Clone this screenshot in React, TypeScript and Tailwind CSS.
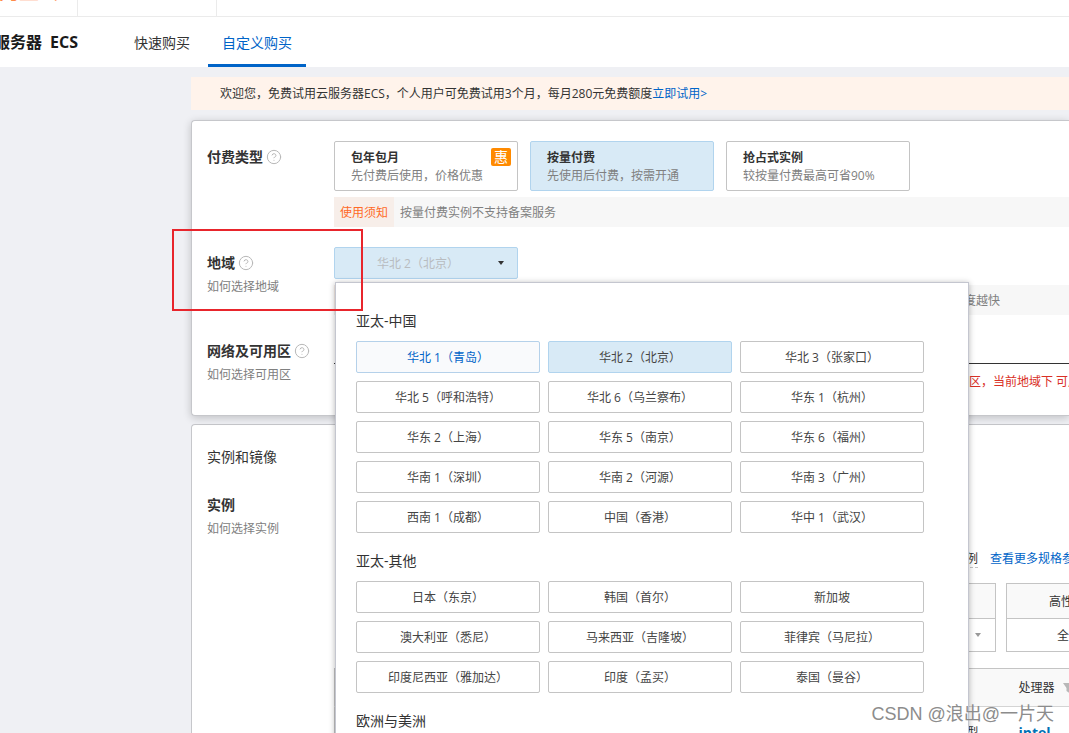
import { useState } from "react";
import type { ReactNode } from "react";
import clsx from "clsx";
import { CircleHelp } from "lucide-react";

const payTypes = [
  { title: "包年包月", desc: "先付费后使用，价格优惠", badge: "惠" },
  { title: "按量付费", desc: "先使用后付费，按需开通" },
  { title: "抢占式实例", desc: "较按量付费最高可省90%" },
];

const regionGroups = [
  {
    name: "亚太-中国",
    regions: [
      "华北 1（青岛）",
      "华北 2（北京）",
      "华北 3（张家口）",
      "华北 5（呼和浩特）",
      "华北 6（乌兰察布）",
      "华东 1（杭州）",
      "华东 2（上海）",
      "华东 5（南京）",
      "华东 6（福州）",
      "华南 1（深圳）",
      "华南 2（河源）",
      "华南 3（广州）",
      "西南 1（成都）",
      "中国（香港）",
      "华中 1（武汉）",
    ],
  },
  {
    name: "亚太-其他",
    regions: [
      "日本（东京）",
      "韩国（首尔）",
      "新加坡",
      "澳大利亚（悉尼）",
      "马来西亚（吉隆坡）",
      "菲律宾（马尼拉）",
      "印度尼西亚（雅加达）",
      "印度（孟买）",
      "泰国（曼谷）",
    ],
  },
  {
    name: "欧洲与美洲",
    regions: ["德国（法兰克福）", "英国（伦敦）", "美国（硅谷）"],
  },
];

const families = ["通用型", "计算型", "异构计算", "高性能计算型"];

function Caret({ className }: { className?: string }) {
  return (
    <svg
      viewBox="0 0 6 4"
      aria-hidden="true"
      className={clsx("pointer-events-none h-1 w-1.5 fill-current", className)}
    >
      <path d="M0 0h6L3 4z" />
    </svg>
  );
}

function Row({
  label,
  link,
  help,
  children,
}: {
  label: string;
  link?: string;
  help?: boolean;
  children: ReactNode;
}) {
  return (
    <div className="flex">
      <div className="w-[127px] shrink-0 pt-1.5">
        <h3 className="flex items-center gap-[3px] text-sm leading-5 font-bold text-[#333]">
          {label}
          {help && (
            <CircleHelp size={16} strokeWidth={1.5} className="text-[#b8b8b8]" />
          )}
        </h3>
        {link && (
          <a href="#" className="mt-1 block leading-5 text-[#808080]">
            {link}
          </a>
        )}
      </div>
      <div className="min-w-0 flex-1">{children}</div>
    </div>
  );
}

function Notice({ tag, children }: { tag: string; children: ReactNode }) {
  return (
    <div className="mt-1.5 flex h-[30px] bg-[#f7f7f7] leading-8 text-[#808080]">
      <span className="w-[60px] bg-[#f7eee9] text-center text-[#ff6a26]">
        {tag}
      </span>
      {children}
    </div>
  );
}

function RegionPanel({
  value,
  onChange,
}: {
  value: string;
  onChange: (region: string) => void;
}) {
  return (
    <div className="absolute top-[35px] left-px z-20 w-[634px] border border-[#c4c6cf] bg-white pt-7 pr-11 pl-5 shadow-[0_1px_6px_rgba(0,0,0,0.3)]">
      {regionGroups.map((group) => (
        <div key={group.name} className="mb-[18px]">
          <h4 className="mb-2.5 text-sm leading-5 text-[#333]">{group.name}</h4>
          <div className="grid grid-cols-3 gap-2">
            {group.regions.map((region, index) => (
              <button
                key={region}
                type="button"
                onClick={() => onChange(region)}
                className={clsx(
                  "h-8 rounded-xs border pt-0.5",
                  region === value
                    ? "border-[#b1d4ee] bg-[#d8eaf6] text-[#444]"
                    : index === 0 && group.name === "亚太-中国"
                      ? "border-[#b5d1ea] bg-[#f9fafc] text-[#0064c8]"
                      : "border-[#c4c4c4] bg-white text-[#444] hover:border-[#b1d4ee]"
                )}
              >
                {region}
              </button>
            ))}
          </div>
        </div>
      ))}
    </div>
  );
}

function Header() {
  return (
    <header className="bg-white">
      <div className="flex h-[17px] overflow-hidden border-b border-[#ebebeb]">
        <div className="flex w-[78px] shrink-0 items-end justify-end border-r border-[#ebebeb] pr-[18px] pb-3">
          <span className="text-xl leading-6 font-bold whitespace-nowrap text-[#ff8a4a]">
            阿里云
          </span>
        </div>
        <div className="w-[139px] border-r border-[#ebebeb]" />
      </div>
      <div className="flex h-[50px] items-center">
        <div className="flex w-[78px] shrink-0 justify-end overflow-hidden">
          <h1 className="flex gap-2 text-base font-bold whitespace-nowrap text-[#1a1a1a]">
            <span>云服务器</span>
            <span>ECS</span>
          </h1>
        </div>
        <nav className="ml-[42px] flex h-full text-sm">
          <a href="#" className="flex items-center px-3.5 pb-[3px] pt-1 text-[#333]">
            快速购买
          </a>
          <a
            href="#"
            className="ml-1 flex items-center border-b-[3px] border-[#0064c8] px-3.5 pt-1 text-[#0064c8]"
          >
            自定义购买
          </a>
        </nav>
      </div>
    </header>
  );
}

export default function App() {
  const [pay, setPay] = useState("按量付费");
  const [region, setRegion] = useState("华北 2（北京）");

  return (
    <div className="relative h-screen overflow-hidden bg-[#eff0f4] font-['Open_Sans','Noto_Sans_CJK_SC',sans-serif] text-xs text-[#333]">
      <Header />

      <main className="pt-2.5 pl-[191px]">
        <p className="h-[33px] bg-[#fff3eb] pl-[29px] leading-[33px] whitespace-nowrap">
          欢迎您，免费试用云服务器ECS，个人用户可免费试用3个月，每月280元免费额度
          <a href="#" className="text-[#0064c8]">
            立即试用&gt;
          </a>
        </p>

        <section className="relative z-10 mt-2.5 flex flex-col gap-5 rounded-l border border-r-0 border-[#c6c7cb] bg-white pt-5 pb-[23px] pl-[15px] shadow-[0_2px_8px_rgba(0,0,0,0.2)]">
          <Row label="付费类型" help>
            <div className="flex gap-3">
              {payTypes.map((item) => (
                <button
                  key={item.title}
                  type="button"
                  onClick={() => setPay(item.title)}
                  className={clsx(
                    "relative h-[50px] w-[184px] rounded-xs border px-4 pt-0.5 text-left leading-[18px]",
                    item.title === pay
                      ? "border-[#b1d4ee] bg-[#d8eaf6]"
                      : "border-[#c4c4c4] bg-white"
                  )}
                >
                  <span className="block font-bold">{item.title}</span>
                  <span className="block whitespace-nowrap text-[#808080]">
                    {item.desc}
                  </span>
                  {item.badge && (
                    <span className="absolute top-1.5 right-1.5 w-5 rounded-xs bg-[#ff8a00] text-center text-sm leading-[18px] text-white">
                      {item.badge}
                    </span>
                  )}
                </button>
              ))}
            </div>
            <Notice tag="使用须知">
              <span className="pl-1.5">按量付费实例不支持备案服务</span>
            </Notice>
          </Row>

          <Row label="地域" link="如何选择地域" help>
            <div className="relative">
              <div className="relative w-[184px]">
                <select
                  aria-label="地域"
                  value={region}
                  onChange={(e) => setRegion(e.target.value)}
                  className="block h-8 w-full appearance-none rounded-xs border border-[#b1d4ee] bg-[#d8eaf6] pt-0.5 pr-4 text-center text-[#b8bcc0]"
                >
                  {regionGroups.map((group) => (
                    <optgroup key={group.name} label={group.name}>
                      {group.regions.map((name) => (
                        <option key={name}>{name}</option>
                      ))}
                    </optgroup>
                  ))}
                </select>
                <Caret className="absolute top-3.5 right-3.5 text-[#333]" />
              </div>
              <RegionPanel value={region} onChange={setRegion} />
            </div>
            <Notice tag="温馨提示">
              <span className="w-[606px] text-right">网络访问速度越快</span>
            </Notice>
          </Row>

          <Row label="网络及可用区" link="如何选择可用区" help>
            <div className="mt-7 border-t border-[#333]">
              <p className="mt-2 pl-[635px] leading-5 whitespace-nowrap text-[#d93026]">
                区，当前地域下 可用区
              </p>
            </div>
          </Row>
        </section>

        <section className="mt-2 rounded-l border border-r-0 border-[#c6c7cb] bg-white pt-[22px] pb-10 pl-[15px]">
          <h2 className="mb-[22px] text-sm leading-5">实例和镜像</h2>
          <Row label="实例" link="如何选择实例">
            <div className="flex gap-3 pt-[60px] leading-5 whitespace-nowrap">
              <div className="w-[644px] shrink-0 text-right">
                <span className="border-b border-dashed border-[#c4c4c4]">
                  选择实例
                </span>
              </div>
              <a href="#" className="text-[#0064c8]">
                查看更多规格参数
              </a>
            </div>

            <div className="mt-3.5 flex gap-2.5 pl-[168px]">
              {families.map((name) => (
                <div
                  key={name}
                  className="w-[158px] shrink-0 border border-[#c4c4c4] text-center"
                >
                  <div className="h-[35px] border-b border-[#c4c4c4] bg-[#f9f9f9] leading-9">
                    {name}
                  </div>
                  <div className="relative">
                    <select
                      aria-label={name}
                      className="block h-8 w-full appearance-none pt-0.5 pr-8 text-center"
                    >
                      <option>全部</option>
                    </select>
                    <Caret className="absolute top-3.5 right-3.5 text-[#999]" />
                  </div>
                </div>
              ))}
            </div>

            <table className="mt-4 w-full table-fixed border border-r-0 border-[#c4c4c4] text-left">
              <colgroup>
                <col className="w-[684px]" />
                <col />
              </colgroup>
              <thead>
                <tr className="h-[38px] border-b border-[#d4d4d4] bg-[#f9f9f9]">
                  <th className="pl-4 font-normal">规格族</th>
                  <th className="font-normal whitespace-nowrap">
                    处理器
                    <svg
                      viewBox="0 0 10 10"
                      aria-hidden="true"
                      className="ml-2 inline size-2.5 fill-[#b8b8b8]"
                    >
                      <path d="M0 0h10L6.5 5v5L3.5 8V5z" />
                    </svg>
                  </th>
                </tr>
              </thead>
              <tbody>
                <tr className="h-[52px]">
                  <td className="pr-10 text-right">通用型</td>
                  <td className="text-sm font-bold text-[#0071b5]">intel</td>
                </tr>
              </tbody>
            </table>
          </Row>
        </section>
      </main>

      {/* highlight box around the region label */}
      <div className="pointer-events-none absolute top-[229px] left-[172px] z-30 h-[82px] w-[191px] border-2 border-[#e8252c]" />
      <div className="pointer-events-none absolute right-[15px] bottom-[5px] z-30 font-['Liberation_Sans','Noto_Sans_CJK_SC',sans-serif] text-lg leading-7 text-[#8c8c8c]">
        CSDN @浪出@一片天
      </div>
    </div>
  );
}
